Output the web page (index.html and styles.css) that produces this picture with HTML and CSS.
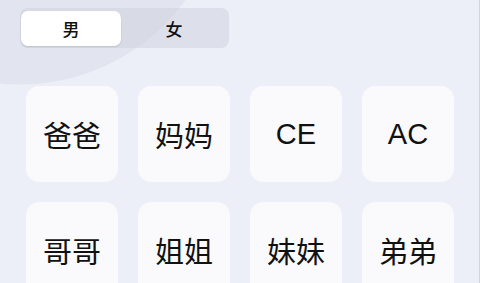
FILE: index.html
```html
<!DOCTYPE html>
<html lang="zh-CN">
<head>
    <meta charset="UTF-8">
    <meta name="viewport" content="width=device-width, initial-scale=1.0">
    <title>亲戚称呼</title>
    <link rel="stylesheet" href="styles.css">
</head>
<body>
    <div class="page">
        <div class="gender-switch">
            <div class="gender-tab active">男</div>
            <div class="gender-tab">女</div>
        </div>
        <div class="relation-grid">
            <div class="relation-card">爸爸</div>
            <div class="relation-card">妈妈</div>
            <div class="relation-card">CE</div>
            <div class="relation-card">AC</div>
            <div class="relation-card">哥哥</div>
            <div class="relation-card">姐姐</div>
            <div class="relation-card">妹妹</div>
            <div class="relation-card">弟弟</div>
        </div>
    </div>
</body>
</html>
```

FILE: styles.css
```css
html, body {
    margin: 0;
    padding: 0;
    height: 100%;
    overflow: hidden;
}
body {
    font-family: "Liberation Sans", "Noto Sans CJK SC", sans-serif;
    color: #111;
    background-color: #eceef8;
    background-image: radial-gradient(circle 205px at 20px -120px, #e2e5ef 99.5%, rgba(236, 238, 248, 0) 100%);
    border-right: 1px solid #d2d4dc;
    box-sizing: border-box;
}
.page {
    padding-top: 8px;
}
.gender-switch {
    display: flex;
    width: 209px;
    height: 40px;
    margin-left: 20px;
    padding: 3px 2px 2px 1px;
    box-sizing: border-box;
    background-color: rgba(205, 208, 220, 0.5);
    border-radius: 8px;
}
.gender-tab {
    flex: 1;
    display: flex;
    align-items: center;
    justify-content: center;
    font-family: "Noto Sans CJK SC", sans-serif;
    font-size: 17px;
    font-weight: 500;
    border-radius: 7px;
}
.gender-tab.active {
    flex: 0 0 100px;
    background-color: #fff;
    box-shadow: 0 1px 2px rgba(0, 0, 0, 0.12);
}
.relation-grid {
    display: grid;
    grid-template-columns: repeat(4, 92px);
    grid-auto-rows: 96px;
    gap: 20px;
    margin-top: 38px;
    padding-left: 26px;
}
.relation-card {
    display: flex;
    align-items: center;
    justify-content: center;
    background-color: #fafafc;
    border-radius: 13px;
    font-size: 29px;
}
```
